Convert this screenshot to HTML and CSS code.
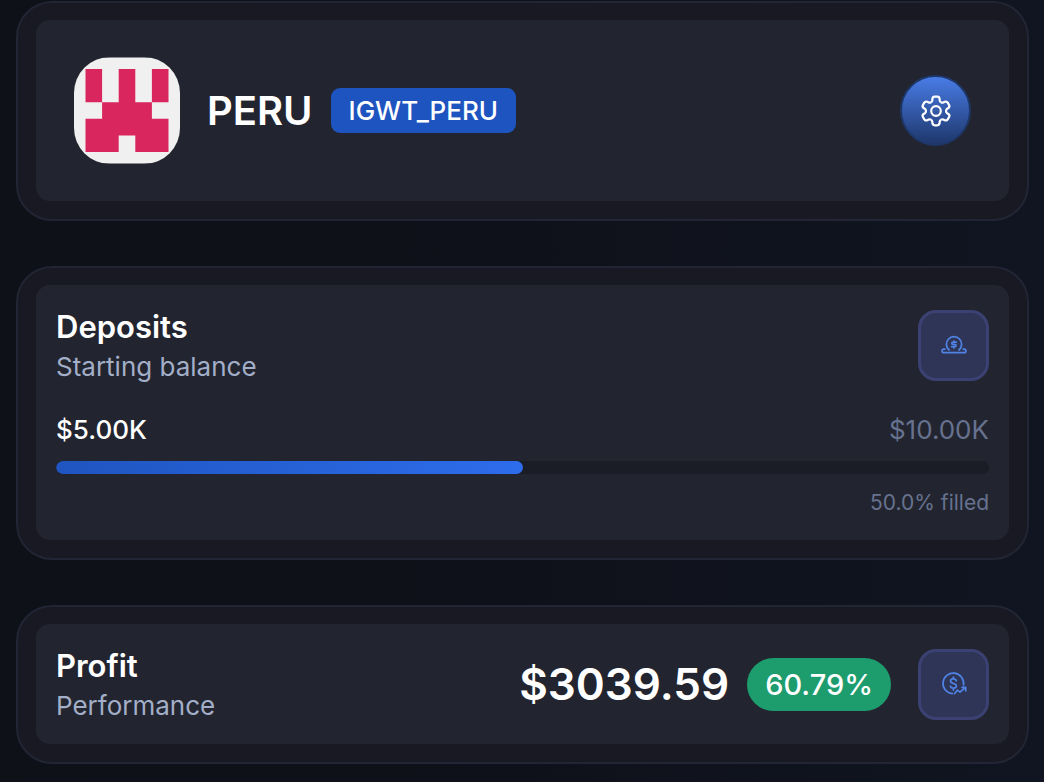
FILE: index.html
```html
<!DOCTYPE html>
<html lang="en">
<head>
  <meta charset="UTF-8" />
  <meta name="viewport" content="width=device-width, initial-scale=1.0"/>
  <title>PERU</title>
  <link rel="stylesheet" href="styles.css">
</head>
<body>

<main class="container">
  <section class="card">
    <div class="card-inner profile">
      <svg class="avatar" viewBox="0 0 106 106" aria-hidden="true">
        <rect width="106" height="106" fill="#f0f0f0"/>
        <path fill="#d9265f" d="M11.5 11.5h16.6v33.2H11.5zM44.7 11.5h16.6v33.2h16.6v16.6h16.6v33.2H61.3V77.9H44.7v16.6H11.5V61.3h16.6V44.7h16.6zM77.9 11.5h16.6v33.2H77.9z"/>
      </svg>
      <h1 class="name">PERU</h1>
      <span class="tag">IGWT_PERU</span>
      <button class="settings-btn" type="button" aria-label="Settings">
        <svg class="settings-icon" viewBox="-16 -16 32 32" aria-hidden="true">
          <defs>
            <path id="tooth" d="M-5-8.7C-4.2-9.2-3.8-9.8-3.7-10.6L-3.6-12.2Q-3.3-14.3-1.4-14.3H1.4Q3.3-14.3 3.6-12.2L3.7-10.6C3.8-9.8 4.2-9.2 5-8.7"/>
          </defs>
          <use href="#tooth"/>
          <use href="#tooth" transform="rotate(60)"/>
          <use href="#tooth" transform="rotate(120)"/>
          <use href="#tooth" transform="rotate(180)"/>
          <use href="#tooth" transform="rotate(240)"/>
          <use href="#tooth" transform="rotate(300)"/>
          <circle r="4.8"/>
        </svg>
      </button>
    </div>
  </section>

  <section class="card">
    <div class="card-inner">
      <div class="card-head">
        <div class="heading">
          <h2>Deposits</h2>
          <p>Starting balance</p>
        </div>
        <div class="icon-box">
          <svg class="icon" viewBox="0 0 26 26" aria-hidden="true">
            <path d="M8 18A7.600 7.600 0 1 1 18 18"/>
            <path d="M3.800 17.200H2.800a1.600 1.600 0 0 0 0 3.400H23.200a1.600 1.600 0 0 0 0-3.400H22.200"/>
            <path d="M15.200 10.200H12.200C10.300 10.200 10.300 12.400 12.200 12.400H13.600C15.600 12.400 15.600 14.700 13.600 14.700H10.700M13 9v1M13 15v1"/>
          </svg>
        </div>
      </div>
      <div class="amounts">
        <span>$5.00K</span>
        <span class="limit">$10.00K</span>
      </div>
      <div class="progress" role="progressbar" aria-label="Deposits" aria-valuenow="50" aria-valuemin="0" aria-valuemax="100">
        <div class="progress-fill" style="width: 50%"></div>
      </div>
      <p class="filled">50.0% filled</p>
    </div>
  </section>

  <section class="card">
    <div class="card-inner">
      <div class="card-head">
        <div class="heading">
          <h2>Profit</h2>
          <p>Performance</p>
        </div>
        <strong class="profit">$3039.59</strong>
        <span class="percent">60.79%</span>
        <div class="icon-box">
          <svg class="icon" viewBox="0 0 26 26" aria-hidden="true">
            <path d="M11.500 22.700A10.300 10.300 0 1 1 22.500 14"/>
            <path d="M15.300 9.800C15 8.500 14 7.900 12.400 7.900c-1.800 0-2.900.8-2.900 2.200 0 3.200 5.900 1.600 5.900 4.900 0 1.400-1.200 2.200-3 2.200-1.700 0-2.800-.8-3-2.200M12.400 6v1.900M12.400 17.200v1.900"/>
            <path d="M13.700 22.500l2.700-3.300 2.600 2 5.200-4.500M21 16.300h3.700v3.500"/>
          </svg>
        </div>
      </div>
    </div>
  </section>
</main>

</body>
</html>
```
FILE: styles.css
```css
* {
  box-sizing: border-box;
}

body {
  font-family: Inter, 'Liberation Sans', sans-serif;
  background: linear-gradient(to right, #0e1118, #0f111a 50%, #101521);
  color: #fff;
  margin: 0;
  min-height: 100vh;
}

h1, h2, p {
  margin: 0;
}

.container {
  display: flex;
  flex-direction: column;
  gap: 45px;
  padding: 1px 15px 18px 16px;
}

.card {
  background-color: #191923;
  border: 2px solid #212534;
  border-radius: 36px;
  padding: 17px 18px 18px;
}

.card-inner {
  background-color: #22252f;
  border-radius: 14px;
  padding: 20px;
}

.profile {
  display: flex;
  align-items: center;
  padding: 37px 38px;
}

.avatar {
  width: 106px;
  height: 107px;
  border-radius: 36px;
}

.name {
  margin-left: 27px;
  font-size: 40px;
  font-weight: 600;
  line-height: 48px;
}

.tag {
  margin-left: 18px;
  padding: 0 18px;
  border-radius: 9px;
  background-color: #1e54bf;
  font-size: 26px;
  font-weight: 500;
  line-height: 45px;
}

.settings-btn {
  display: flex;
  align-items: center;
  justify-content: center;
  width: 71px;
  height: 71px;
  margin-left: auto;
  padding: 0;
  border: 2px solid #1e3768;
  border-radius: 50%;
  background: linear-gradient(#4a7eea, #1d3568) border-box;
  color: #fff;
  cursor: pointer;
}

.settings-icon {
  width: 32px;
  height: 32px;
  fill: none;
  stroke: currentColor;
  stroke-width: 2.2;
}

.card-head {
  display: flex;
  align-items: center;
}

.heading {
  margin-right: auto;
}

.heading h2 {
  font-size: 31px;
  font-weight: 600;
  line-height: 44px;
}

.heading p {
  color: #a3aec8;
  font-size: 26px;
  line-height: 36px;
}

.icon-box {
  display: flex;
  align-items: center;
  justify-content: center;
  width: 71px;
  height: 71px;
  border: 3px solid #3b4273;
  border-radius: 18px;
  background-color: #2f3556;
}

.icon {
  width: 26px;
  height: 26px;
  fill: none;
  stroke: #4f83e6;
  stroke-width: 1.7;
  stroke-linecap: round;
  stroke-linejoin: round;
}

.amounts {
  display: flex;
  justify-content: space-between;
  margin-top: 27px;
  font-size: 26px;
  font-weight: 500;
  line-height: 36px;
}

.limit {
  color: #67728f;
  font-weight: 400;
}

.progress {
  height: 13px;
  margin-top: 13px;
  border-radius: 7px;
  background-color: #1a1c26;
  overflow: hidden;
}

.progress-fill {
  height: 100%;
  border-radius: 7px;
  background: linear-gradient(to right, #1f55c0, #2d6ceb);
}

.filled {
  margin-top: 12px;
  color: #67728f;
  font-size: 21px;
  line-height: 34px;
  text-align: right;
}

.profit {
  font-size: 44px;
  font-weight: 600;
  line-height: 56px;
}

.percent {
  margin: 0 27px 0 18px;
  padding: 0 18px;
  border-radius: 27px;
  background-color: #1d9c6e;
  font-size: 29px;
  font-weight: 500;
  line-height: 53px;
}
```
